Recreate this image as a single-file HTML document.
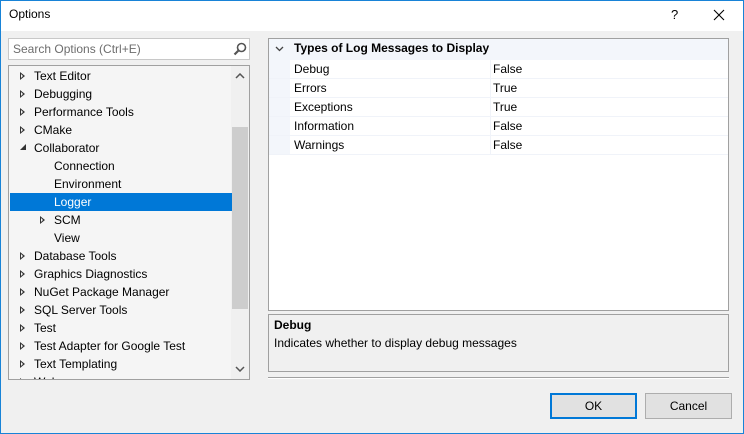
<!DOCTYPE html>
<html><head><style>
*{margin:0;padding:0;box-sizing:border-box}
body{width:744px;height:434px;overflow:hidden;font-family:"Segoe UI","Liberation Sans",sans-serif;font-size:12px;color:#000;background:#f0f0f0;position:relative}
.win{position:absolute;left:0;top:0;width:744px;height:434px;background:#f0f0f0}
.frame{position:absolute;left:0;top:0;width:744px;height:434px;border:1px solid #1883d7;pointer-events:none}
.title{position:absolute;left:0;top:0;width:744px;height:31px;background:#fff}
.abs{position:absolute}
.tree{left:8px;top:65px;width:242px;height:315px;border:1px solid #a0a0a0;background:#f5f5f5;overflow:hidden}
.row{position:absolute;left:1px;width:222px;height:18px;line-height:18px;white-space:nowrap}
.tri{position:absolute;width:0;height:0;border-top:4px solid transparent;border-bottom:4px solid transparent;border-left:5px solid #333}
.tri::after{content:"";position:absolute;left:-4px;top:-2px;border-top:2px solid transparent;border-bottom:2px solid transparent;border-left:2px solid #f5f5f5}
.pg{left:268px;top:38px;width:461px;height:273px;border:1px solid #a0a0a0;background:#fff}
.pr{position:absolute;left:0;width:459px;height:19px;line-height:18px;border-bottom:1px solid #f0f3f9}
.btn{position:absolute;top:393px;height:26px;width:87px;background:#e1e1e1;border:1px solid #adadad;text-align:center;line-height:24px}
</style></head><body>
<div class="win">
<div class="title">
<div class="abs" style="left:9px;top:7px;font-size:12px">Options</div>
<div class="abs" style="left:671px;top:7px;font-size:13px">?</div>
<svg class="abs" style="left:713px;top:9px" width="12" height="12"><path d="M1 1L11 11M11 1L1 11" stroke="#000" stroke-width="1.1"/></svg>
</div>
<div class="abs" style="left:8px;top:38px;width:242px;height:22px;border:1px solid #c8c8c8;background:#fff">
<span class="abs" style="left:4px;top:3px;color:#6d6d6d">Search Options (Ctrl+E)</span>
<svg class="abs" style="left:224px;top:3px" width="14" height="14"><circle cx="8.5" cy="5.5" r="4" fill="none" stroke="#555" stroke-width="1.6"/><path d="M5.5 8.5L1.5 12.5" stroke="#555" stroke-width="2.2"/></svg>
</div>
<div class="abs tree">
<div class="abs" style="left:222px;top:0;width:18px;height:313px;background:#f0f0f0"></div>
<div class="abs" style="left:223px;top:61px;width:16px;height:182px;background:#cdcdcd"></div>
<svg class="abs" style="left:226px;top:7px" width="10" height="6"><path d="M1 5L5 1L9 5" fill="none" stroke="#555" stroke-width="1.5"/></svg>
<svg class="abs" style="left:226px;top:300px" width="10" height="6"><path d="M1 1L5 5L9 1" fill="none" stroke="#555" stroke-width="1.5"/></svg>
<div class="row" style="top:1px"><i class="tri" style="left:10px;top:5px"></i><span class="abs" style="left:24px">Text Editor</span></div>
<div class="row" style="top:19px"><i class="tri" style="left:10px;top:5px"></i><span class="abs" style="left:24px">Debugging</span></div>
<div class="row" style="top:37px"><i class="tri" style="left:10px;top:5px"></i><span class="abs" style="left:24px">Performance Tools</span></div>
<div class="row" style="top:55px"><i class="tri" style="left:10px;top:5px"></i><span class="abs" style="left:24px">CMake</span></div>
<div class="row" style="top:73px"><svg class="abs" style="left:10px;top:5px" width="7" height="7"><path d="M6 0L6 6L0 6Z" fill="#333"/></svg><span class="abs" style="left:24px">Collaborator</span></div>
<div class="row" style="top:91px"><span class="abs" style="left:44px">Connection</span></div>
<div class="row" style="top:109px"><span class="abs" style="left:44px">Environment</span></div>
<div class="row" style="top:127px;background:#0078d7;color:#fff"><span class="abs" style="left:44px">Logger</span></div>
<div class="row" style="top:145px"><i class="tri" style="left:30px;top:5px"></i><span class="abs" style="left:44px">SCM</span></div>
<div class="row" style="top:163px"><span class="abs" style="left:44px">View</span></div>
<div class="row" style="top:181px"><i class="tri" style="left:10px;top:5px"></i><span class="abs" style="left:24px">Database Tools</span></div>
<div class="row" style="top:199px"><i class="tri" style="left:10px;top:5px"></i><span class="abs" style="left:24px">Graphics Diagnostics</span></div>
<div class="row" style="top:217px"><i class="tri" style="left:10px;top:5px"></i><span class="abs" style="left:24px">NuGet Package Manager</span></div>
<div class="row" style="top:235px"><i class="tri" style="left:10px;top:5px"></i><span class="abs" style="left:24px">SQL Server Tools</span></div>
<div class="row" style="top:253px"><i class="tri" style="left:10px;top:5px"></i><span class="abs" style="left:24px">Test</span></div>
<div class="row" style="top:271px"><i class="tri" style="left:10px;top:5px"></i><span class="abs" style="left:24px">Test Adapter for Google Test</span></div>
<div class="row" style="top:289px"><i class="tri" style="left:10px;top:5px"></i><span class="abs" style="left:24px">Text Templating</span></div>
<div class="row" style="top:307px"><i class="tri" style="left:10px;top:5px"></i><span class="abs" style="left:24px">Web</span></div>
</div>
<div class="abs pg">
<div class="abs" style="left:0;top:0;width:459px;height:21px;background:#f3f6fb"></div>
<div class="abs" style="left:0;top:21px;width:21px;height:95px;background:#f3f6fb"></div>
<svg class="abs" style="left:6px;top:7px" width="9" height="6"><path d="M1 1L4.5 4.5L8 1" fill="none" stroke="#444" stroke-width="1.3"/></svg>
<div class="abs" style="left:25px;top:2px;font-weight:bold">Types of Log Messages to Display</div>
<div class="pr" style="top:21px"><span class="abs" style="left:25px">Debug</span><span class="abs" style="left:224px">False</span></div>
<div class="pr" style="top:40px"><span class="abs" style="left:25px">Errors</span><span class="abs" style="left:224px">True</span></div>
<div class="pr" style="top:59px"><span class="abs" style="left:25px">Exceptions</span><span class="abs" style="left:224px">True</span></div>
<div class="pr" style="top:78px"><span class="abs" style="left:25px">Information</span><span class="abs" style="left:224px">False</span></div>
<div class="pr" style="top:97px"><span class="abs" style="left:25px">Warnings</span><span class="abs" style="left:224px">False</span></div>
<div class="abs" style="left:221px;top:21px;width:1px;height:95px;background:#f0f3f9"></div>
</div>
<div class="abs" style="left:268px;top:314px;width:461px;height:58px;border:1px solid #a0a0a0;background:#f0f0f0">
<div class="abs" style="left:5px;top:3px;font-weight:bold">Debug</div>
<div class="abs" style="left:5px;top:21px">Indicates whether to display debug messages</div>
</div>
<div class="abs" style="left:268px;top:377px;width:461px;height:2px;border-top:1px solid #a0a0a0;border-bottom:1px solid #fff"></div>
<div class="btn" style="left:550px;border:2px solid #0078d7;line-height:22px">OK</div>
<div class="btn" style="left:645px">Cancel</div>
</div>
<div class="frame"></div>
</body></html>
